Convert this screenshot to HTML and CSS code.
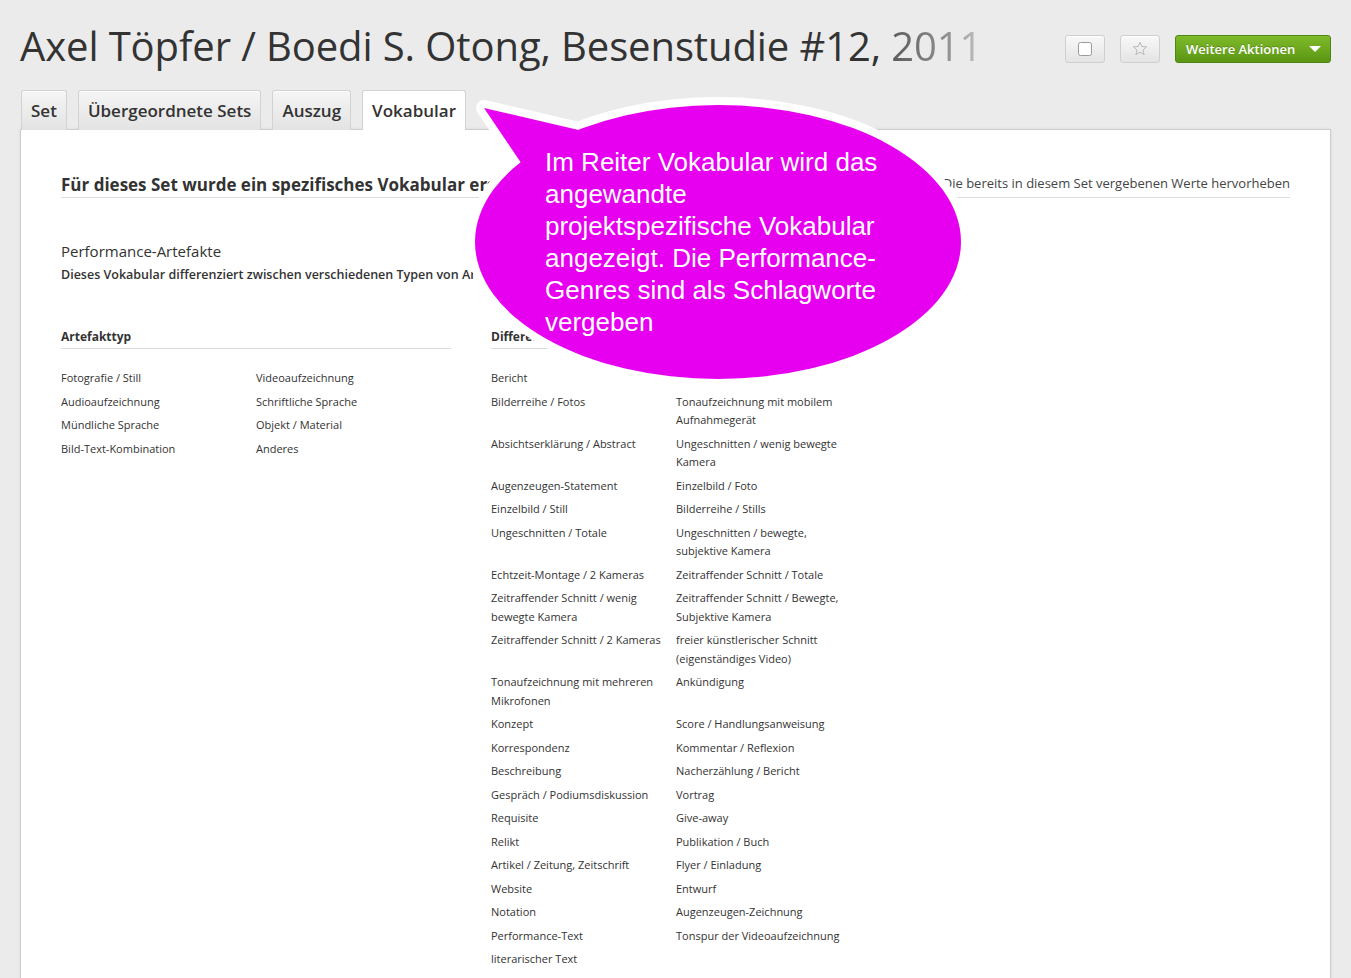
FILE: index.html
```html
<!DOCTYPE html>
<html lang="de">
<head>
<meta charset="utf-8">
<title>Axel Töpfer / Boedi S. Otong, Besenstudie #12, 2011</title>
<link rel="stylesheet" href="styles.css">
</head>
<body>
<header class="page-head">
  <h1 class="title">Axel Töpfer / Boedi S. Otong, Besenstudie #12, <span class="fade">2011</span></h1>
  <div class="actions">
    <button class="btn btn-icon" type="button" aria-label="Auswählen">
      <svg width="14" height="14" viewBox="0 0 14 14"><rect x="0.5" y="0.5" width="13" height="13" rx="2" fill="#fff" stroke="#9a9a9a"/></svg>
    </button>
    <button class="btn btn-icon" type="button" aria-label="Favorit">
      <svg width="16" height="16" viewBox="0 0 16 16"><path d="M8 1.2l1.9 4.3 4.6.4-3.5 3.1 1.1 4.6L8 11.2l-4.1 2.4 1.1-4.6L1.5 5.9l4.6-.4z" fill="none" stroke="#b9b9b9" stroke-width="1" stroke-linejoin="round"/></svg>
    </button>
    <button class="btn btn-green" type="button">Weitere Aktionen <span class="caret"></span></button>
  </div>
</header>

<nav class="tabs">
  <a class="tab">Set</a>
  <a class="tab">Übergeordnete Sets</a>
  <a class="tab">Auszug</a>
  <a class="tab active">Vokabular</a>
</nav>

<main class="panel">
  <div class="vocab-head">
    <h2 class="vocab-title">Für dieses Set wurde ein spezifisches Vokabular erstellt</h2>
    <span class="vocab-toggle">Die bereits in diesem Set vergebenen Werte hervorheben</span>
  </div>

  <section class="vocab">
    <h3 class="vocab-name">Performance-Artefakte</h3>
    <p class="vocab-desc">Dieses Vokabular differenziert zwischen verschiedenen Typen von Artefakten. Weitere Informationen finden Sie unter www.performativ.zhdk.ch</p>

    <div class="groups">
      <div class="group group-a">
        <h4 class="group-title">Artefakttyp</h4>
        <ul class="terms">
          <li>Fotografie / Still</li>
          <li>Videoaufzeichnung</li>
          <li>Audioaufzeichnung</li>
          <li>Schriftliche Sprache</li>
          <li>Mündliche Sprache</li>
          <li>Objekt / Material</li>
          <li>Bild-Text-Kombination</li>
          <li>Anderes</li>
        </ul>
      </div>
      <div class="group group-b">
        <h4 class="group-title">Differenzierung</h4>
        <ul class="terms">
          <li>Bericht</li>
          <li>Video-Rohmaterial</li>
          <li>Bilderreihe / Fotos</li>
          <li>Tonaufzeichnung mit mobilem Aufnahmegerät</li>
          <li>Absichtserklärung / Abstract</li>
          <li>Ungeschnitten / wenig bewegte Kamera</li>
          <li>Augenzeugen-Statement</li>
          <li>Einzelbild / Foto</li>
          <li>Einzelbild / Still</li>
          <li>Bilderreihe / Stills</li>
          <li>Ungeschnitten / Totale</li>
          <li>Ungeschnitten / bewegte, subjektive Kamera</li>
          <li>Echtzeit-Montage / 2 Kameras</li>
          <li>Zeitraffender Schnitt / Totale</li>
          <li>Zeitraffender Schnitt / wenig bewegte Kamera</li>
          <li>Zeitraffender Schnitt / Bewegte, Subjektive Kamera</li>
          <li>Zeitraffender Schnitt / 2 Kameras</li>
          <li>freier künstlerischer Schnitt (eigenständiges Video)</li>
          <li>Tonaufzeichnung mit mehreren Mikrofonen</li>
          <li>Ankündigung</li>
          <li>Konzept</li>
          <li>Score / Handlungsanweisung</li>
          <li>Korrespondenz</li>
          <li>Kommentar / Reflexion</li>
          <li>Beschreibung</li>
          <li>Nacherzählung / Bericht</li>
          <li>Gespräch / Podiumsdiskussion</li>
          <li>Vortrag</li>
          <li>Requisite</li>
          <li>Give-away</li>
          <li>Relikt</li>
          <li>Publikation / Buch</li>
          <li>Artikel / Zeitung, Zeitschrift</li>
          <li>Flyer / Einladung</li>
          <li>Website</li>
          <li>Entwurf</li>
          <li>Notation</li>
          <li>Augenzeugen-Zeichnung</li>
          <li>Performance-Text</li>
          <li>Tonspur der Videoaufzeichnung</li>
          <li>literarischer Text</li>
        </ul>
      </div>
    </div>
  </section>
</main>

<div class="callout">
  <svg class="callout-shape" width="520" height="300" viewBox="0 0 520 300">
    <g fill="#fff" stroke="#fff" stroke-width="16" stroke-linejoin="round">
      <ellipse cx="258" cy="152" rx="243" ry="137"/>
      <polygon points="24,18 170,52 82,104"/>
    </g>
    <g fill="#e600ef">
      <ellipse cx="258" cy="152" rx="243" ry="137"/>
      <polygon points="24,18 170,52 82,104"/>
    </g>
  </svg>
  <p class="callout-text">Im Reiter Vokabular wird das<br>angewandte<br>projektspezifische Vokabular<br>angezeigt. Die Performance-<br>Genres sind als Schlagworte<br>vergeben</p>
</div>
</body>
</html>
```

FILE: styles.css
```css
* { box-sizing: border-box; }

html, body {
  margin: 0;
  padding: 0;
}

body {
  background: #ebebeb;
  color: #333;
  font-family: "Open Sans", "DejaVu Sans", sans-serif;
  position: relative;
  min-height: 978px;
  overflow: hidden;
}

/* header */
.page-head {
  display: flex;
  justify-content: space-between;
  align-items: flex-start;
  height: 90px;
  padding: 22px 20px 0 20px;
}

.title {
  margin: 0;
  font-size: 40px;
  line-height: 48px;
  font-weight: 400;
  color: #333;
  white-space: nowrap;
  letter-spacing: -0.1px;
}

.fade {
  background: linear-gradient(90deg, #5a5a5a 0%, #9a9a9a 70%, #c4c4c4 100%);
  -webkit-background-clip: text;
  background-clip: text;
  color: transparent;
}

.actions {
  display: flex;
  gap: 15px;
  margin-top: 13px;
}

.btn {
  height: 28px;
  border-radius: 3px;
  font-family: inherit;
  cursor: pointer;
  display: inline-flex;
  align-items: center;
  justify-content: center;
  padding: 0;
}

.btn-icon {
  width: 40px;
  background: linear-gradient(#f8f8f8, #e4e4e4);
  border: 1px solid #cfcfcf;
  box-shadow: inset 0 1px 0 #fff;
}

.btn-green {
  width: 156px;
  justify-content: flex-start;
  padding-left: 10px;
  background: linear-gradient(#7fba2a, #5b9614);
  border: 1px solid #4f8512;
  color: #fff;
  font-size: 13px;
  font-weight: 600;
  text-shadow: 0 -1px 0 rgba(0,0,0,.2);
}

.caret {
  width: 0;
  height: 0;
  border-left: 6px solid transparent;
  border-right: 6px solid transparent;
  border-top: 6px solid #fff;
  margin-left: 14px;
}

/* tabs */
.tabs {
  display: flex;
  gap: 11px;
  padding: 0 21px;
  position: relative;
  z-index: 2;
  margin-bottom: -1px;
}

.tab {
  display: block;
  height: 40px;
  line-height: 40px;
  padding: 0 9px;
  font-size: 17px;
  font-weight: 600;
  color: #333;
  background: linear-gradient(#f5f5f5, #e3e3e3);
  border: 1px solid #d2d2d2;
  border-bottom: 0;
  border-radius: 3px 3px 0 0;
  box-shadow: inset 0 1px 0 #fff;
}

.tab.active {
  background: #fff;
}

/* panel */
.panel {
  margin: 0 20px;
  background: #fff;
  border: 1px solid #cdcdcd;
  box-shadow: 0 0 3px rgba(0,0,0,.08);
  padding: 43px 40px 60px 40px;
  position: relative;
  z-index: 1;
}

.vocab-head {
  display: flex;
  justify-content: space-between;
  align-items: flex-end;
  border-bottom: 1px solid #dcdcdc;
}

.vocab-title {
  margin: 0;
  font-size: 17px;
  line-height: 24px;
  font-weight: 700;
  color: #333;
}

.vocab-toggle {
  font-size: 13px;
  line-height: 18px;
  padding-bottom: 5px;
  color: #444;
}

.vocab-name {
  margin: 42px 0 0 0;
  font-size: 15px;
  line-height: 22px;
  font-weight: 400;
  color: #333;
}

.vocab-desc {
  margin: 4px 0 0 0;
  font-size: 12.5px;
  line-height: 18px;
  font-weight: 600;
  color: #333;
}

.groups {
  display: flex;
  gap: 40px;
  margin-top: 44px;
}

.group {
  width: 390px;
}

.group-title {
  margin: 0;
  font-size: 12px;
  line-height: 17px;
  font-weight: 700;
  padding-bottom: 3px;
  border-bottom: 1px solid #dcdcdc;
}

.terms {
  list-style: none;
  margin: 20px 0 0 0;
  padding: 0;
  display: grid;
  row-gap: 5px;
  font-size: 11px;
  line-height: 18.5px;
  color: #333;
}

.group-a .terms { grid-template-columns: 195px 195px; }
.group-b .terms { grid-template-columns: 185px 185px; }

.terms li { padding-right: 10px; }

/* callout */
.callout {
  position: absolute;
  left: 460px;
  top: 90px;
  width: 520px;
  height: 300px;
  z-index: 5;
}

.callout-shape {
  position: absolute;
  left: 0;
  top: 0;
}

.callout-text {
  position: absolute;
  left: 85px;
  top: 56px;
  margin: 0;
  color: #fff;
  font-family: "Liberation Sans", Arial, sans-serif;
  font-size: 26px;
  line-height: 32px;
  white-space: nowrap;
}
```
